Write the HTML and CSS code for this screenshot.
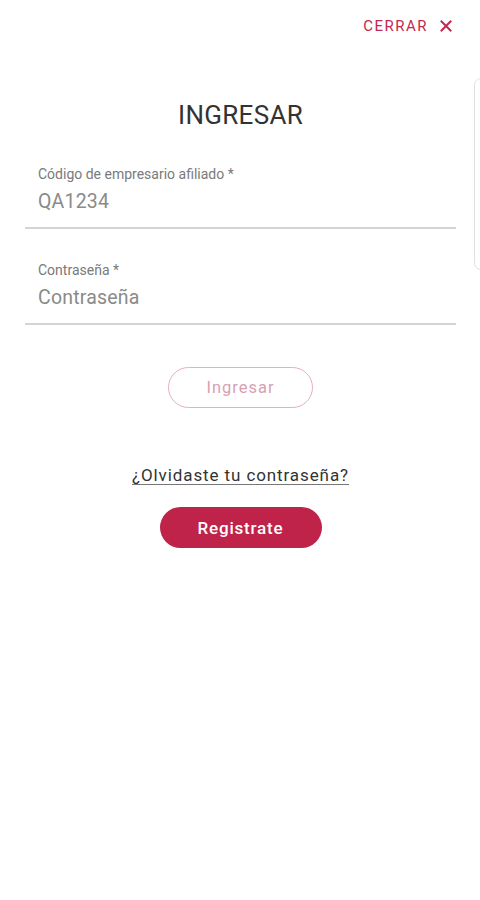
FILE: index.html
```html
<!DOCTYPE html>
<html lang="es">
<head>
<meta charset="utf-8">
<title>Ingresar</title>
<link rel="stylesheet" href="styles.css">
</head>
<body>
<div class="screen">
  <header class="topbar">
    <button class="close">
      <span>CERRAR</span>
      <svg width="12" height="12" viewBox="0 0 12 12"><path d="M1.5 1.5 L10.5 10.5 M10.5 1.5 L1.5 10.5" stroke="#c3284f" stroke-width="2" stroke-linecap="square"/></svg>
    </button>
  </header>
  <main class="content">
    <h1 class="title">INGRESAR</h1>
    <div class="field">
      <label class="label">Código de empresario afiliado *</label>
      <div class="value">QA1234</div>
    </div>
    <div class="field">
      <label class="label">Contraseña *</label>
      <div class="value">Contraseña</div>
    </div>
    <div class="actions">
      <button class="btn-outline">Ingresar</button>
      <a class="forgot" href="#">¿Olvidaste tu contraseña?</a>
      <button class="btn-fill">Registrate</button>
    </div>
  </main>
  <div class="side-tab"></div>
</div>
</body>
</html>
```
FILE: styles.css
```css
* { box-sizing: border-box; }
html, body { margin: 0; padding: 0; background: #fff; }
body { font-family: Roboto, "Noto Sans", sans-serif; }
.screen { position: relative; width: 480px; height: 900px; overflow: hidden; }
.topbar { display: flex; justify-content: flex-end; padding: 16px 28px 0 0; height: 60px; }
.close { display: flex; align-items: center; gap: 12px; border: 0; background: none; padding: 0; height: 20px; font-family: Roboto, sans-serif; font-size: 15px; letter-spacing: 1.5px; color: #c3284f; cursor: pointer; }
.content { padding: 0 24px 0 25px; }
.title { margin: 39px 0 0; text-align: center; font-size: 26px; font-weight: 400; color: #333; line-height: 32px; letter-spacing: 0.3px; }
.field { margin-top: 35px; border-bottom: 2px solid #d4d4d4; padding: 0 0 13px 13px; width: 431px; }
.field + .field { margin-top: 33px; }
.label { display: block; font-size: 14px; color: #7a7a7a; line-height: 16px; }
.value { font-size: 19.5px; color: #8a8a8a; line-height: 24px; margin-top: 8px; letter-spacing: 0.2px; }
.actions { display: flex; flex-direction: column; align-items: center; padding-top: 42px; }
.btn-outline { width: 145px; height: 41px; border: 1px solid #e6aebe; border-radius: 21px; background: #fff; color: #d9a0b2; font-family: Roboto, sans-serif; font-size: 16.5px; letter-spacing: 1px; }
.forgot { margin-top: 57px; font-size: 17px; color: #333; letter-spacing: 0.9px; line-height: 20px; text-decoration: underline; text-underline-offset: 3px; text-decoration-color: #777; }
.btn-fill { margin-top: 22px; width: 162px; height: 41px; border: 0; border-radius: 21px; background: #c0234a; color: #fff; font-family: Roboto, sans-serif; font-size: 17px; font-weight: 500; letter-spacing: 0.8px; }
.side-tab { position: absolute; left: 474px; top: 78px; width: 20px; height: 192px; border: 1.5px solid #e0e0e0; border-radius: 7px; background: #fff; }
```
